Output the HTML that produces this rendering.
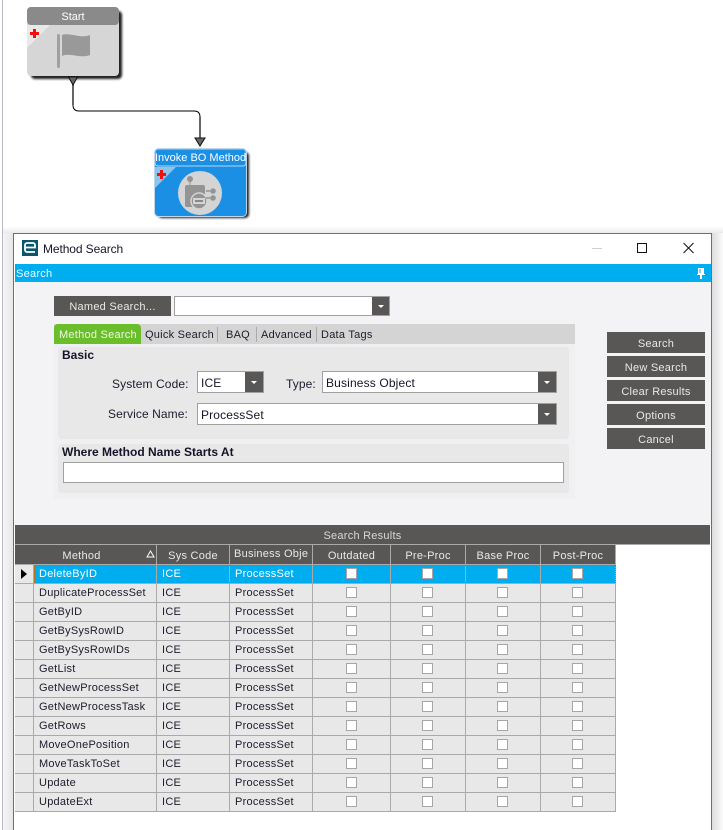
<!DOCTYPE html>
<html>
<head>
<meta charset="utf-8">
<style>
html,body{margin:0;padding:0;background:#fff}
body{width:723px;height:830px;position:relative;overflow:hidden;font-family:"Liberation Sans",sans-serif;font-size:11px;color:#1c1c2c;letter-spacing:.25px}
.a{position:absolute;box-sizing:border-box}
.t{position:absolute;white-space:nowrap;line-height:14px}
.btn{position:absolute;background:#595755;color:#e8e8e8;text-align:center;box-sizing:border-box}
.combo{position:absolute;box-sizing:border-box;background:#fff;border:1px solid #a0a0a0;font-size:12px;letter-spacing:.15px;padding-left:3px;color:#141428;outline:0}
.dd{position:absolute;right:0;top:0;bottom:0;width:18px;background:#595755}
.dd:after{content:"";position:absolute;left:6px;top:50%;margin-top:-1px;border-left:3px solid transparent;border-right:3px solid transparent;border-top:3px solid #fff}
.sep{position:absolute;top:327px;width:1px;height:15px;background:#aaa}
table{position:absolute;left:15px;top:545px;border-collapse:separate;border-spacing:0;table-layout:fixed;width:601px}
td,th{box-sizing:border-box;height:19px;padding:1px 0 0 5px;border-right:1px solid #aaa;border-bottom:1px solid #aaa;font-weight:normal;overflow:hidden;white-space:nowrap;background:#e8e8e8;text-align:left;line-height:17px;vertical-align:top}
td.s{padding:0}
td.s:nth-child(n+6){padding-right:2px}
th{height:20px;background:#595755;color:#e8e8e8;text-align:center;padding:3px 0 0;line-height:16px}
tr.sel td{background:#00adef;color:#fff}
i.c{display:block;width:11px;height:11px;margin:3px auto 0;border:1px solid #a6a6a6;background:#fff;box-sizing:border-box}
</style>
</head>
<body>
<div class="a" style="left:2px;top:0;width:1px;height:830px;background:#b9b9c4"></div>
<div class="a" style="left:3px;top:226px;width:720px;height:8px;background:linear-gradient(#fff,#e8e8e8)"></div>
<div class="a" style="left:3px;top:233px;width:10px;height:597px;background:linear-gradient(90deg,#f6f6f6,#e6e6e6)"></div>
<div class="a" style="left:712px;top:233px;width:11px;height:597px;background:linear-gradient(90deg,#dcdcdc,#fbfbfb)"></div>

<svg class="a" style="left:0;top:0" width="723" height="226">
  <defs><filter id="b" x="-10%" y="-10%" width="120%" height="120%"><feGaussianBlur stdDeviation="1"/></filter></defs>
  <rect x="31" y="11" width="91" height="68" rx="4" fill="#222" filter="url(#b)"/>
  <rect x="158" y="152" width="91" height="66" rx="4" fill="#222" filter="url(#b)"/>
  <path d="M73 82V105Q73 111 79 111H194Q200 111 200 117V138" fill="none" stroke="#000" stroke-width="1"/>
  <path d="M73 82V105M200 117V138" fill="none" stroke="#666" stroke-width="2"/>
  <path d="M68.500 77H77.500L73 85Z" fill="#666" stroke="#111"/>
  <path d="M195 138H205L200 146Z" fill="#666" stroke="#111"/>

  <rect x="27" y="7" width="92" height="69" rx="4" fill="#d6d6d6"/>
  <path d="M27 25H50L27 48Z" fill="#e9e9e9"/>
  <path d="M27 21V11a4 4 0 0 1 4-4H115a4 4 0 0 1 4 4V21a4 4 0 0 1-4 4H31a4 4 0 0 1-4-4Z" fill="#8a8a8a"/>
  <path d="M33 29h3v3h3v3h-3v3h-3v-3h-3v-3h3Z" fill="#f01010"/>
  <rect x="57" y="34" width="3" height="34" rx="1.500" fill="#a0a0a0"/>
  <path d="M62 35C70 32 80 39 90 35V55C80 59 70 52 62 56Z" fill="#999"/>

  <rect x="154.500" y="148.500" width="92" height="68" rx="4" fill="#1a8fe3" stroke="#bcd6ec"/>
  <path d="M155 167H176L155 188Z" fill="#8cc4ee"/>
  <path d="M155 152a3 3 0 0 1 3-3H243a3 3 0 0 1 3 3V163a3 3 0 0 1-3 3H158a3 3 0 0 1-3-3Z" fill="none" stroke="#bcd6ec"/>
  <path d="M160 170h3v3h3v3h-3v3h-3v-3h-3v-3h3Z" fill="#f01010"/>
  <circle cx="200" cy="193" r="22" fill="#d4d4d4"/>
  <circle cx="190" cy="179" r="3" fill="#949494"/>
  <rect x="189.500" y="181" width="1" height="5" fill="#949494"/>
  <rect x="185" y="185" width="20" height="22" rx="2" fill="#949494"/>
  <circle cx="199" cy="201" r="8" fill="#949494" stroke="#d4d4d4" stroke-width="1.500"/>
  <rect x="193" y="198" width="12" height="6" fill="#d4d4d4"/>
  <rect x="195" y="200" width="8" height="2" fill="#888"/>
  <path d="M206 191H210M206 198H210" stroke="#949494" stroke-width="1.500"/>
  <circle cx="213" cy="191" r="2.800" fill="#949494"/>
  <circle cx="213" cy="198" r="2.800" fill="#949494"/>
</svg>
<div class="t" style="left:27px;width:92px;top:10px;text-align:center;color:#fff;font-size:11px;letter-spacing:0">Start</div>
<div class="t" style="left:155px;width:91px;top:151px;text-align:center;color:#fff;font-size:11px;letter-spacing:0">Invoke BO Method</div>

<!-- window -->
<div class="a" style="left:13px;top:233px;width:699px;height:597px;background:#fff;border:1px solid #6f6f6f;border-bottom:0"></div>
<div class="a" style="left:15px;top:264px;width:696px;height:18px;background:#00adef"></div>
<div class="a" style="left:15px;top:282px;width:696px;height:243px;background:#f3f3f5"></div>
<svg class="a" style="left:22px;top:240px" width="16" height="16"><rect width="16" height="16" fill="#0b566a"/><path d="M13 12H5a2 2 0 0 1-2-2V5a2 2 0 0 1 2-2H11a2 2 0 0 1 2 2V7.500H3.500" fill="none" stroke="#fff" stroke-width="1.800"/></svg>
<div class="t" style="left:43px;top:242px;font-size:12px;letter-spacing:-.1px;color:#141428">Method Search</div>
<svg class="a" style="left:585px;top:238px" width="115" height="22">
  <path d="M7 10.500H17" stroke="#cfcfcf"/>
  <rect x="52.500" y="5.500" width="9" height="9" fill="none" stroke="#111"/>
  <path d="M98.500 5L108.500 15M108.500 5L98.500 15" stroke="#111" fill="none"/>
</svg>
<div class="t" style="left:16px;top:267px;color:#f2fbff">Search</div>
<svg class="a" style="left:696px;top:268px" width="10" height="11"><path d="M2 0H8V7H6V6H4V7H2ZM3.500 1V5H4.500V1ZM4 7H6V11H4ZM1 6H9V7H1Z" fill="#fff"/></svg>

<!-- search form -->
<div class="btn" style="left:54px;top:296px;width:117px;height:20px;line-height:22px">Named Search...</div>
<div class="combo" style="left:174px;top:296px;width:216px;height:20px;border-width:1px"><div class="dd" style="width:17px"></div></div>

<div class="a" style="left:54px;top:324px;width:521px;height:175px;background:#f0f0f2"></div>
<div class="a" style="left:54px;top:324px;width:521px;height:20px;background:#d4d4d4"></div>
<div class="a" style="left:54px;top:324px;width:87px;height:20px;background:#6abd2b;border-top-left-radius:4px;border-top-right-radius:4px"></div>
<div class="t" style="left:59px;top:328px;color:#eef8e2">Method Search</div>
<div class="t" style="left:145px;top:328px">Quick Search</div>
<div class="sep" style="left:217px"></div>
<div class="t" style="left:226px;top:328px">BAQ</div>
<div class="sep" style="left:256px"></div>
<div class="t" style="left:261px;top:328px">Advanced</div>
<div class="sep" style="left:316px"></div>
<div class="t" style="left:321px;top:328px">Data Tags</div>

<div class="a" style="left:58px;top:347px;width:511px;height:92px;background:#e8e8e8;border-radius:4px"></div>
<div class="t" style="left:62px;top:348px;font-size:12px;font-weight:bold;letter-spacing:0;color:#141428">Basic</div>
<div class="t" style="left:112px;top:377px;font-size:12px;letter-spacing:.1px">System Code:</div>
<div class="combo" style="left:197px;top:371px;width:67px;height:22px;line-height:23px;padding-left:3px">ICE<div class="dd"></div></div>
<div class="t" style="left:286px;top:377px;font-size:12px;letter-spacing:.1px">Type:</div>
<div class="combo" style="left:322px;top:371px;width:235px;height:22px;line-height:23px">Business Object<div class="dd"></div></div>
<div class="t" style="left:108px;top:407px;font-size:12px;letter-spacing:.1px">Service Name:</div>
<div class="combo" style="left:197px;top:403px;width:360px;height:22px;line-height:22px">ProcessSet<div class="dd"></div></div>

<div class="a" style="left:58px;top:444px;width:511px;height:49px;background:#e8e8e8;border-radius:4px"></div>
<div class="t" style="left:62px;top:445px;font-size:12px;font-weight:bold;letter-spacing:0;color:#141428">Where Method Name Starts At</div>
<div class="combo" style="left:63px;top:462px;width:501px;height:21px"></div>

<div class="btn" style="left:607px;top:332px;width:98px;height:21px;line-height:24px">Search</div>
<div class="btn" style="left:607px;top:356px;width:98px;height:21px;line-height:24px">New Search</div>
<div class="btn" style="left:607px;top:380px;width:98px;height:21px;line-height:24px">Clear Results</div>
<div class="btn" style="left:607px;top:404px;width:98px;height:21px;line-height:24px">Options</div>
<div class="btn" style="left:607px;top:428px;width:98px;height:21px;line-height:24px">Cancel</div>

<!-- results -->
<div class="a" style="left:15px;top:525px;width:695px;height:20px;background:#595755;border-bottom:1px solid #aaa;color:#d8d8d8;text-align:center;line-height:22px">Search Results</div>
<table>
<colgroup><col style="width:19px"><col style="width:123px"><col style="width:73px"><col style="width:83px"><col style="width:78px"><col style="width:75px"><col style="width:75px"><col style="width:75px"></colgroup>
<tr><th colspan="2" style="padding-right:8px">Method</th><th>Sys Code</th><th style="text-align:left;padding:0 0 0 4px;line-height:18px">Business Obje</th><th>Outdated</th><th>Pre-Proc</th><th>Base Proc</th><th>Post-Proc</th></tr>
<tr class="sel"><td class="s" style="background:#e8e8e8"></td><td>DeleteByID</td><td>ICE</td><td>ProcessSet</td><td class="s"><i class="c"></i></td><td class="s"><i class="c"></i></td><td class="s"><i class="c"></i></td><td class="s"><i class="c"></i></td></tr>
<tr><td class="s"></td><td>DuplicateProcessSet</td><td>ICE</td><td>ProcessSet</td><td class="s"><i class="c"></i></td><td class="s"><i class="c"></i></td><td class="s"><i class="c"></i></td><td class="s"><i class="c"></i></td></tr>
<tr><td class="s"></td><td>GetByID</td><td>ICE</td><td>ProcessSet</td><td class="s"><i class="c"></i></td><td class="s"><i class="c"></i></td><td class="s"><i class="c"></i></td><td class="s"><i class="c"></i></td></tr>
<tr><td class="s"></td><td>GetBySysRowID</td><td>ICE</td><td>ProcessSet</td><td class="s"><i class="c"></i></td><td class="s"><i class="c"></i></td><td class="s"><i class="c"></i></td><td class="s"><i class="c"></i></td></tr>
<tr><td class="s"></td><td>GetBySysRowIDs</td><td>ICE</td><td>ProcessSet</td><td class="s"><i class="c"></i></td><td class="s"><i class="c"></i></td><td class="s"><i class="c"></i></td><td class="s"><i class="c"></i></td></tr>
<tr><td class="s"></td><td>GetList</td><td>ICE</td><td>ProcessSet</td><td class="s"><i class="c"></i></td><td class="s"><i class="c"></i></td><td class="s"><i class="c"></i></td><td class="s"><i class="c"></i></td></tr>
<tr><td class="s"></td><td>GetNewProcessSet</td><td>ICE</td><td>ProcessSet</td><td class="s"><i class="c"></i></td><td class="s"><i class="c"></i></td><td class="s"><i class="c"></i></td><td class="s"><i class="c"></i></td></tr>
<tr><td class="s"></td><td>GetNewProcessTask</td><td>ICE</td><td>ProcessSet</td><td class="s"><i class="c"></i></td><td class="s"><i class="c"></i></td><td class="s"><i class="c"></i></td><td class="s"><i class="c"></i></td></tr>
<tr><td class="s"></td><td>GetRows</td><td>ICE</td><td>ProcessSet</td><td class="s"><i class="c"></i></td><td class="s"><i class="c"></i></td><td class="s"><i class="c"></i></td><td class="s"><i class="c"></i></td></tr>
<tr><td class="s"></td><td>MoveOnePosition</td><td>ICE</td><td>ProcessSet</td><td class="s"><i class="c"></i></td><td class="s"><i class="c"></i></td><td class="s"><i class="c"></i></td><td class="s"><i class="c"></i></td></tr>
<tr><td class="s"></td><td>MoveTaskToSet</td><td>ICE</td><td>ProcessSet</td><td class="s"><i class="c"></i></td><td class="s"><i class="c"></i></td><td class="s"><i class="c"></i></td><td class="s"><i class="c"></i></td></tr>
<tr><td class="s"></td><td>Update</td><td>ICE</td><td>ProcessSet</td><td class="s"><i class="c"></i></td><td class="s"><i class="c"></i></td><td class="s"><i class="c"></i></td><td class="s"><i class="c"></i></td></tr>
<tr><td class="s"></td><td>UpdateExt</td><td>ICE</td><td>ProcessSet</td><td class="s"><i class="c"></i></td><td class="s"><i class="c"></i></td><td class="s"><i class="c"></i></td><td class="s"><i class="c"></i></td></tr>
</table>
<div class="a" style="left:34px;top:565px;width:582px;height:18px;border:1px dotted #b4701c"></div>
<svg class="a" style="left:146px;top:550px" width="9" height="8"><path d="M4.500 1L8 7H1Z" fill="none" stroke="#fff"/></svg>
<svg class="a" style="left:21px;top:569px" width="7" height="10"><path d="M0 0L6 5L0 10Z" fill="#000"/></svg>
</body>
</html>
